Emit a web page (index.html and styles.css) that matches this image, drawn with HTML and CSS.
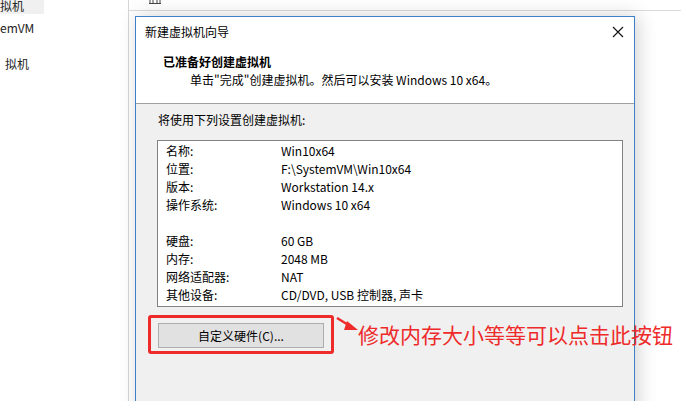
FILE: index.html
```html
<!DOCTYPE html>
<html lang="zh-CN">
<head>
  <meta charset="UTF-8" />
  <title>新建虚拟机向导</title>
  <link rel="stylesheet" href="styles.css">
</head>
<body>

<div class="desktop">
  <aside class="sidebar">
    <div class="tree-item selected">拟机</div>
    <div class="tree-item sub">emVM</div>
    <div class="tree-item gap">拟机</div>
  </aside>

  <main class="workspace">
    <div class="toolbar">
      <svg class="tool-icon" width="12" height="6" viewBox="0 0 12 6">
        <path d="M1 0 V4 M11 0 V4 M4 0 V4 M8 0 V4 M0 4.5 H12" stroke="#444" stroke-width="1" fill="none"/>
      </svg>
    </div>
  </main>

  <!-- wizard window on top of the app -->
  <div class="dialog">
    <div class="titlebar">
      <span>新建虚拟机向导</span>
      <svg class="close" width="12" height="12" viewBox="0 0 12 12">
        <path d="M1 1 L11 11 M11 1 L1 11" stroke="#111" stroke-width="1.1"/>
      </svg>
    </div>

    <div class="header">
      <h1>已准备好创建虚拟机</h1>
      <p>单击"完成"创建虚拟机。然后可以安装 Windows 10 x64。</p>
    </div>

    <div class="content">
      <p class="intro">将使用下列设置创建虚拟机:</p>
      <div class="summary">
        <div class="row"><span class="key">名称:</span><span>Win10x64</span></div>
        <div class="row"><span class="key">位置:</span><span>F:\SystemVM\Win10x64</span></div>
        <div class="row"><span class="key">版本:</span><span>Workstation 14.x</span></div>
        <div class="row"><span class="key">操作系统:</span><span>Windows 10 x64</span></div>
        <div class="row"></div>
        <div class="row"><span class="key">硬盘:</span><span>60 GB</span></div>
        <div class="row"><span class="key">内存:</span><span>2048 MB</span></div>
        <div class="row"><span class="key">网络适配器:</span><span>NAT</span></div>
        <div class="row"><span class="key">其他设备:</span><span>CD/DVD, USB 控制器, 声卡</span></div>
      </div>
      <button class="btn">自定义硬件(C)...</button>
    </div>

    <!-- annotation -->
    <div class="mark"></div>
    <svg class="arrow" width="24" height="18" viewBox="0 0 24 18">
      <path d="M1 1 L14 9" stroke="#ee2a2a" stroke-width="2.4" fill="none"/>
      <path d="M11 4 L22 13 L8 13 Z" fill="#ee2a2a"/>
    </svg>
    <div class="note">修改内存大小等等可以点击此按钮</div>
  </div>
</div>

</body>
</html>
```

FILE: styles.css
```css
body {
  margin: 0;
  font-family: "Microsoft YaHei", "Noto Sans CJK SC", sans-serif;
  font-size: 12px;
  color: #000;
  background: #fff;
}
.desktop {
  position: relative;
  width: 681px;
  height: 401px;
  overflow: hidden;
  display: flex;
}
.sidebar {
  width: 128px;
  border-right: 1px solid #d6d6d6;
  overflow: hidden;
  flex-shrink: 0;
}
.tree-item {
  height: 18px;
  line-height: 18px;
  white-space: nowrap;
  font-size: 12px;
  color: #222;
}
.tree-item.selected {
  width: 44px;
  height: 16px;
  line-height: 16px;
  padding-top: 1px;
  margin-top: -3px;
  background: #f0f0f0;
}
.tree-item.sub {
  margin-top: 5px;
}
.tree-item.gap {
  margin-top: 18px;
  padding-left: 5px;
}
.workspace {
  flex: 1;
}
.toolbar {
  height: 10px;
  border-bottom: 1px solid #dcdcdc;
  position: relative;
}
.tool-icon {
  position: absolute;
  left: 20px;
  top: -1px;
}
.dialog {
  position: absolute;
  left: 135px;
  top: 16px;
  width: 498px;
  height: 400px;
  border: 1px solid #3b83c6;
  background: #f0f0f0;
  box-shadow: 3px 0 18px rgba(0, 0, 0, 0.18);
}
.titlebar {
  height: 30px;
  line-height: 30px;
  padding-left: 9px;
  background: #fff;
  display: flex;
  justify-content: space-between;
  align-items: center;
}
.close {
  margin-right: 10px;
}
.header {
  background: #fff;
  border-bottom: 1px solid #a0a0a0;
  padding-left: 27px;
  box-sizing: border-box;
  height: 57px;
  padding-top: 6px;
}
.header h1 {
  margin: 0;
  font-size: 12px;
  line-height: 18px;
  font-weight: bold;
}
.header p {
  margin: 0;
  line-height: 18px;
  padding-left: 27px;
}
.content {
  padding: 7px 0 0 22px;
}
.intro {
  margin: 0 0 11px 0;
  line-height: 18px;
}
.summary {
  margin-left: -1px;
  border: 1px solid #828282;
  background: #fff;
  padding: 1px 0 2px 8px;
  box-sizing: border-box;
  width: 466px;
}
.row {
  display: flex;
  height: 18px;
  line-height: 18px;
}
.key {
  width: 115px;
  flex-shrink: 0;
}
.btn {
  margin-top: 16px;
  width: 166px;
  height: 25px;
  background: #e1e1e1;
  border: 1px solid #adadad;
  font-family: inherit;
  font-size: 12px;
  color: #000;
  padding: 0;
}
.mark {
  position: absolute;
  left: 12px;
  top: 298px;
  width: 180px;
  height: 33px;
  border: 3px solid #ee2a2a;
  border-radius: 3px;
}
.arrow {
  position: absolute;
  left: 200px;
  top: 300px;
}
.note {
  position: absolute;
  left: 222px;
  top: 303px;
  font-size: 21px;
  line-height: 28px;
  color: #ee2a2a;
  white-space: nowrap;
}
```
